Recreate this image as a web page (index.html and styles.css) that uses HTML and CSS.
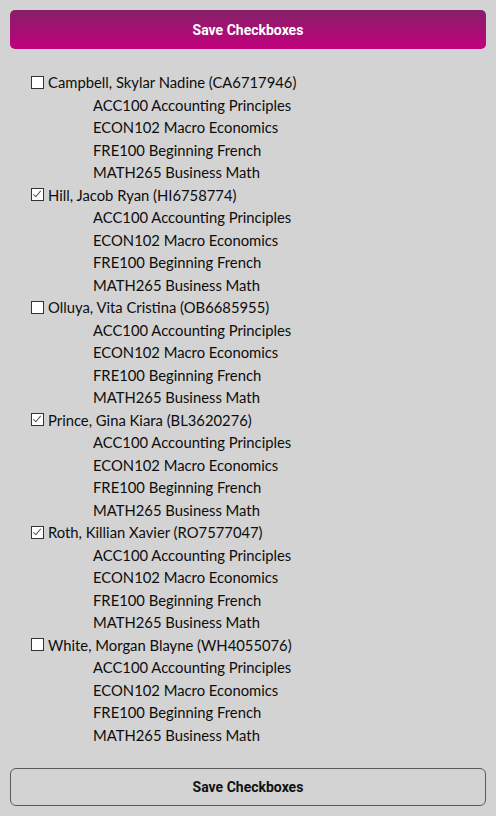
FILE: index.html
```html
<!DOCTYPE html>
<html>
<head>
<meta charset="utf-8">
<link rel="stylesheet" href="styles.css">
</head>
<body>
<div class="page">
  <button class="save save-top">Save Checkboxes</button>
  <ul class="students">
    <li class="student">
      <label class="name"><span class="box"></span>Campbell, Skylar Nadine (CA6717946)</label>
      <ul class="courses"><li>ACC100 Accounting Principles</li><li>ECON102 Macro Economics</li><li>FRE100 Beginning French</li><li>MATH265 Business Math</li></ul>
    </li>
    <li class="student">
      <label class="name"><span class="box checked"></span>Hill, Jacob Ryan (HI6758774)</label>
      <ul class="courses"><li>ACC100 Accounting Principles</li><li>ECON102 Macro Economics</li><li>FRE100 Beginning French</li><li>MATH265 Business Math</li></ul>
    </li>
    <li class="student">
      <label class="name"><span class="box"></span>Olluya, Vita Cristina (OB6685955)</label>
      <ul class="courses"><li>ACC100 Accounting Principles</li><li>ECON102 Macro Economics</li><li>FRE100 Beginning French</li><li>MATH265 Business Math</li></ul>
    </li>
    <li class="student">
      <label class="name"><span class="box checked"></span>Prince, Gina Kiara (BL3620276)</label>
      <ul class="courses"><li>ACC100 Accounting Principles</li><li>ECON102 Macro Economics</li><li>FRE100 Beginning French</li><li>MATH265 Business Math</li></ul>
    </li>
    <li class="student">
      <label class="name"><span class="box checked"></span>Roth, Killian Xavier (RO7577047)</label>
      <ul class="courses"><li>ACC100 Accounting Principles</li><li>ECON102 Macro Economics</li><li>FRE100 Beginning French</li><li>MATH265 Business Math</li></ul>
    </li>
    <li class="student">
      <label class="name"><span class="box"></span>White, Morgan Blayne (WH4055076)</label>
      <ul class="courses"><li>ACC100 Accounting Principles</li><li>ECON102 Macro Economics</li><li>FRE100 Beginning French</li><li>MATH265 Business Math</li></ul>
    </li>
  </ul>
  <button class="save save-bottom">Save Checkboxes</button>
</div>
</body>
</html>
```
FILE: styles.css
```css
html, body {
  margin: 0;
  padding: 0;
  background: #d3d3d3;
}
.page {
  padding: 10px;
  display: flex;
  flex-direction: column;
}
.save {
  display: block;
  width: 100%;
  font-family: Roboto, "Liberation Sans", sans-serif;
  font-weight: bold;
  font-size: 14px;
  cursor: pointer;
}
.save-top {
  height: 39px;
  border: none;
  border-radius: 5px;
  color: #fff;
  background: linear-gradient(to bottom, #862067, #c2007e);
}
.save-bottom {
  height: 38px;
  border: 1px solid #5a5a5a;
  border-radius: 6px;
  color: #111;
  background: transparent;
}
.students {
  list-style: none;
  margin: 22px 0;
  padding: 0 0 0 21px;
  font-family: Lato, "Noto Sans", sans-serif;
  font-size: 14.8px;
  line-height: 22.5px;
  color: #0d0d0d;
}
.name {
  display: flex;
  align-items: center;
}
.box {
  width: 11px;
  height: 11px;
  border: 1px solid #333;
  background: #fff;
  margin-right: 4px;
  position: relative;
}
.box.checked::after {
  content: "";
  position: absolute;
  left: 3px;
  top: 0px;
  width: 3px;
  height: 7px;
  border: solid #555;
  border-width: 0 1.5px 1.5px 0;
  transform: rotate(40deg);
}
.courses {
  list-style: none;
  margin: 0;
  padding: 0 0 0 62px;
}
```
